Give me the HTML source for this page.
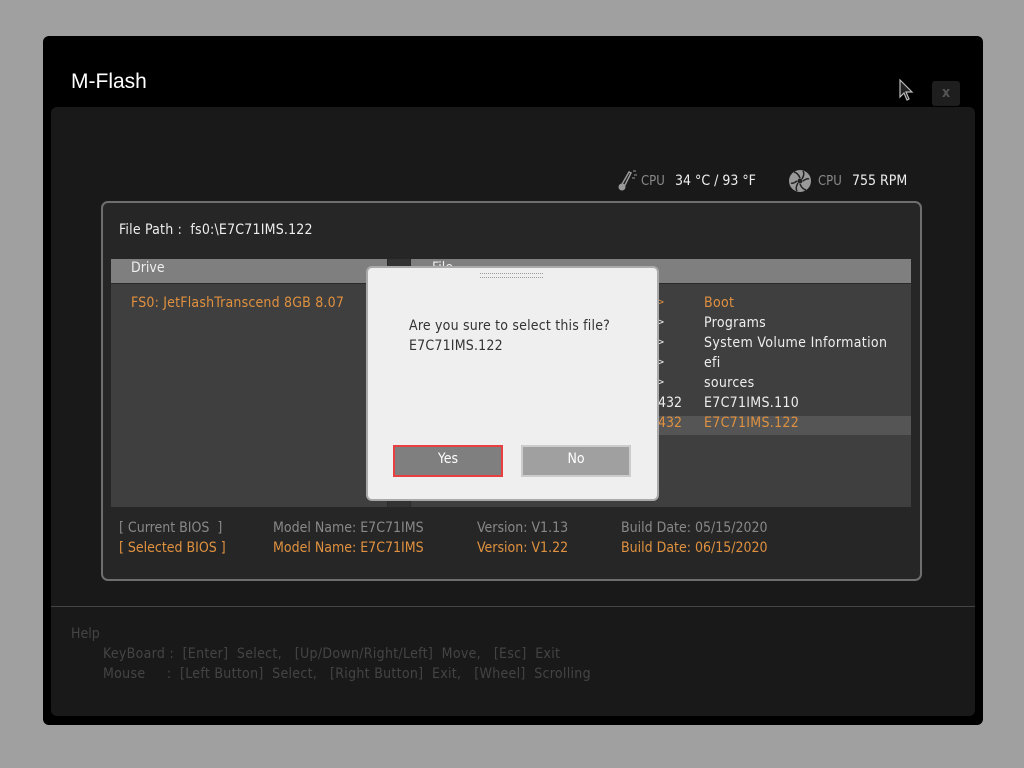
<!DOCTYPE html>
<html><head><meta charset="utf-8"><style>
body{margin:0;width:1024px;height:768px;background:#a0a0a0;font-family:"DejaVu Sans Condensed","Liberation Sans",sans-serif;position:relative;overflow:hidden}
div{position:absolute;box-sizing:border-box}
.t{white-space:nowrap;font-size:14px;line-height:20px}
.o{color:#e0913f}
.w{color:#eee}
.g{color:#8a8a8a}
</style></head><body>
<div style="left:43px;top:36px;width:940px;height:689px;background:#000;border-radius:6px"></div>
<div class="t" style="left:71px;top:70px;font-size:21px;line-height:24px;color:#fff;font-family:'Liberation Sans',sans-serif">M-Flash</div>
<div style="left:932px;top:81px;width:28px;height:25px;background:#1e1e1e;border-radius:3px;color:#555;font-size:14px;font-weight:bold;text-align:center;line-height:25px">x</div>
<svg style="position:absolute;left:899px;top:79px" width="16" height="24"><path d="M1 1 L1 18 L5 14 L8 21 L10 20 L7 13 L13 13 Z" fill="#222" stroke="#bbb" stroke-width="1.2"/></svg>
<div style="left:51px;top:107px;width:924px;height:609px;background:#191919;border-radius:6px"></div>
<svg style="position:absolute;left:617px;top:168px" width="22" height="24"><path d="M4 18 L12 4 L14 5 L7 19" fill="none" stroke="#999" stroke-width="1.5"/><circle cx="5" cy="19" r="3.5" fill="#999"/><path d="M16 3h3M17 7h3M15 10h3" stroke="#999"/></svg>
<div class="t g" style="left:641px;top:172px;font-size:13px">CPU</div>
<div class="t w" style="left:675px;top:171px">34 °C / 93 °F</div>
<svg style="position:absolute;left:788px;top:169px" width="24" height="24"><circle cx="12" cy="12" r="11" fill="#999"/><g stroke="#222" stroke-width="1.5" fill="none"><path d="M12 9 Q10 4 6 3"/><path d="M15 12 Q19 9 21 10"/><path d="M12 15 Q14 20 18 21"/><path d="M9 12 Q5 15 3 14"/><path d="M14 10 Q17 5 15 2"/><path d="M10 14 Q7 19 9 22"/></g><circle cx="12" cy="12" r="2.5" fill="#222"/></svg>
<div class="t g" style="left:818px;top:172px;font-size:13px">CPU</div>
<div class="t w" style="left:852px;top:171px">755 RPM</div>
<div style="left:101px;top:201px;width:821px;height:380px;background:#262626;border:2px solid #6e6e6e;border-radius:7px"></div>
<div class="t w" style="left:119px;top:220px;letter-spacing:0.2px">File Path :&nbsp; fs0:\E7C71IMS.122</div>
<div style="left:111px;top:259px;width:800px;height:25px;background:#7f7f7f;border-bottom:1px solid #2a2a2a"></div>
<div style="left:111px;top:284px;width:800px;height:223px;background:#3f3f3f"></div>
<div style="left:387px;top:259px;width:24px;height:248px;background:#333;border-left:1px solid #2a2a2a;border-right:1px solid #2a2a2a"></div>
<div class="t w" style="left:131px;top:258px">Drive</div>
<div class="t w" style="left:432px;top:258px">File</div>
<div class="t o" style="left:131px;top:293px;letter-spacing:0.2px">FS0: JetFlashTranscend 8GB 8.07</div>
<div style="left:411px;top:416px;width:500px;height:19px;background:#555"></div>
<div class="t o" style="left:704px;top:293px;letter-spacing:0.3px">Boot</div>
<div class="t w" style="left:704px;top:313px;letter-spacing:0.3px">Programs</div>
<div class="t w" style="left:704px;top:333px;letter-spacing:0.35px">System Volume Information</div>
<div class="t w" style="left:704px;top:353px;letter-spacing:0.3px">efi</div>
<div class="t w" style="left:704px;top:373px;letter-spacing:0.3px">sources</div>
<div class="t w" style="left:658px;top:393px">432</div>
<div class="t w" style="left:704px;top:393px;letter-spacing:0.3px">E7C71IMS.110</div>
<div class="t o" style="left:658px;top:413px">432</div>
<div class="t o" style="left:704px;top:413px;letter-spacing:0.3px">E7C71IMS.122</div>
<div class="t o" style="left:657px;top:293px;font-size:10px">&gt;</div>
<div class="t w" style="left:657px;top:313px;font-size:10px">&gt;</div>
<div class="t w" style="left:657px;top:333px;font-size:10px">&gt;</div>
<div class="t w" style="left:657px;top:353px;font-size:10px">&gt;</div>
<div class="t w" style="left:657px;top:373px;font-size:10px">&gt;</div>
<div class="t" style="left:119px;top:518px;color:#888">[ Current BIOS&nbsp; ]</div>
<div class="t" style="left:273px;top:518px;color:#888">Model Name: E7C71IMS</div>
<div class="t" style="left:477px;top:518px;color:#888">Version: V1.13</div>
<div class="t" style="left:621px;top:518px;color:#888">Build Date: 05/15/2020</div>
<div class="t o" style="left:119px;top:538px">[ Selected BIOS ]</div>
<div class="t o" style="left:273px;top:538px">Model Name: E7C71IMS</div>
<div class="t o" style="left:477px;top:538px">Version: V1.22</div>
<div class="t o" style="left:621px;top:538px">Build Date: 06/15/2020</div>
<div style="left:51px;top:606px;width:924px;height:1px;background:#444"></div>
<div class="t" style="left:71px;top:624px;color:#444">Help</div>
<div class="t" style="left:103px;top:644px;color:#444;letter-spacing:0.3px">KeyBoard :&nbsp; [Enter]&nbsp; Select,&nbsp;&nbsp; [Up/Down/Right/Left]&nbsp; Move,&nbsp;&nbsp; [Esc]&nbsp; Exit</div>
<div class="t" style="left:103px;top:664px;color:#444;letter-spacing:0.3px">Mouse&nbsp;&nbsp;&nbsp;&nbsp; :&nbsp; [Left Button]&nbsp; Select,&nbsp;&nbsp; [Right Button]&nbsp; Exit,&nbsp;&nbsp; [Wheel]&nbsp; Scrolling</div>
<div style="left:366px;top:266px;width:293px;height:235px;background:#efefef;border:2px solid #aaa;border-radius:6px"></div>
<div style="left:480px;top:273px;width:63px;height:5px;border-top:1px dotted #999;border-bottom:1px dotted #999"></div>
<div class="t" style="left:409px;top:316px;color:#333;letter-spacing:0.2px">Are you sure to select this file?</div>
<div class="t" style="left:409px;top:336px;color:#333;letter-spacing:0.2px">E7C71IMS.122</div>
<div style="left:393px;top:445px;width:110px;height:32px;background:#7f7f7f;border:2px solid #e84040"></div>
<div class="t" style="left:393px;top:449px;width:110px;text-align:center;color:#fff">Yes</div>
<div style="left:521px;top:445px;width:110px;height:32px;background:#a0a0a0;border:2px solid #ccc"></div>
<div class="t" style="left:521px;top:449px;width:110px;text-align:center;color:#fff">No</div>
</body></html>
